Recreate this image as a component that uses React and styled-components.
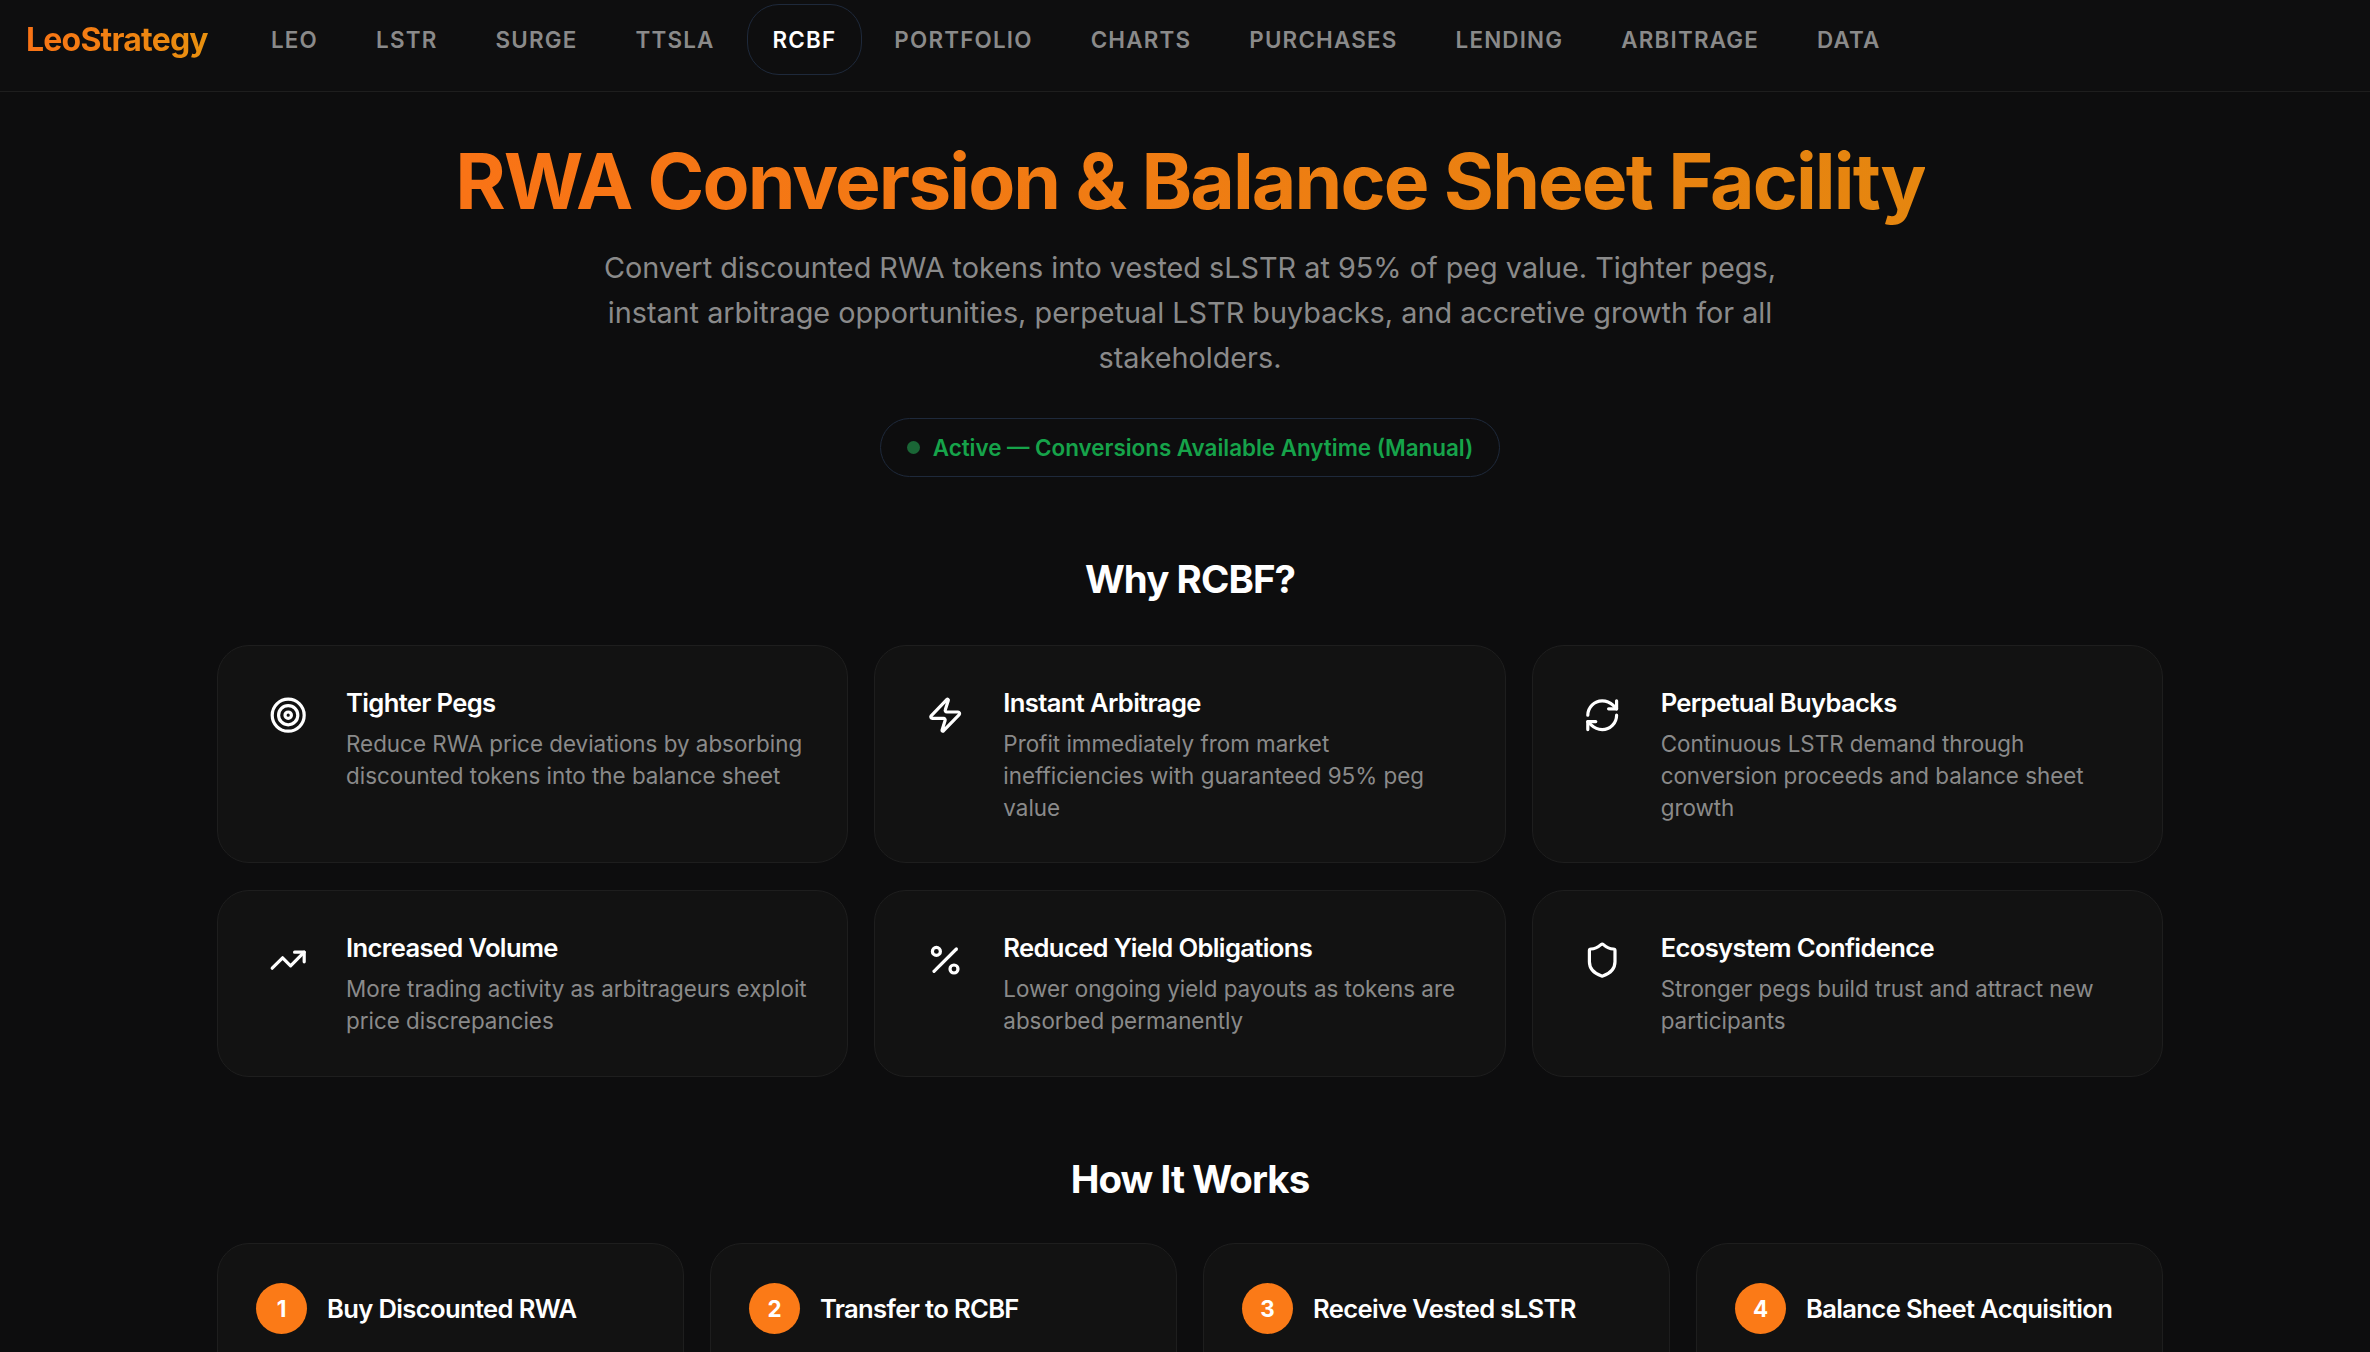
import React from "react";
import styled, { createGlobalStyle } from "styled-components";
import { Target, Zap, RefreshCw, TrendingUp, Percent, Shield } from "lucide-react";

const GlobalStyle = createGlobalStyle`
  html, body {
    margin: 0;
    padding: 0;
    background: #0d0d0e;
    font-family: "Inter", "Liberation Sans", sans-serif;
    color: #fff;
  }
  * { box-sizing: border-box; }
`;

const Page = styled.div`
  height: 1352px;
  overflow: hidden;
`;

const Nav = styled.nav`
  height: 92px;
  display: flex;
  align-items: flex-start;
  padding: 4px 0 0 26px;
  background: #0e0e0f;
  border-bottom: 1px solid #1e1e1e;
`;

const Logo = styled.div`
  width: 182px;
  margin-right: 37px;
  height: 71px;
  line-height: 71px;
  font-size: 32px;
  font-weight: 700;
  letter-spacing: -0.8px;
  white-space: nowrap;
  background: linear-gradient(90deg, #f97316, #e8900f);
  -webkit-background-clip: text;
  background-clip: text;
  color: transparent;
`;

const NavList = styled.div`
  display: flex;
  gap: 6px;
`;

const NavItem = styled.a`
  height: 71px;
  line-height: 69px;
  padding: 0 25px;
  font-size: 22.4px;
  font-weight: 600;
  letter-spacing: 1.2px;
  text-transform: uppercase;
  color: ${({ $active }) => ($active ? "#fff" : "#8a8a8a")};
  border: 1px solid ${({ $active }) => ($active ? "#1e293b" : "transparent")};
  border-radius: 32px;
`;

const Main = styled.main`
  padding-left: 10px;
  display: flex;
  flex-direction: column;
  align-items: center;
`;

const Title = styled.h1`
  margin: 43.5px 0 0;
  font-size: 76.8px;
  line-height: 92px;
  font-weight: 700;
  letter-spacing: -1.92px;
  background: linear-gradient(90deg, #f97316, #e5860f);
  -webkit-background-clip: text;
  background-clip: text;
  color: transparent;
`;

const Lead = styled.p`
  margin: 17px 0 0;
  width: 1200px;
  text-align: center;
  font-size: 28.8px;
  line-height: 45.3px;
  color: #8a8a8a;
`;

const Badge = styled.div`
  margin-top: 38px;
  height: 59px;
  display: flex;
  align-items: center;
  gap: 13px;
  padding: 0 26px;
  border: 1.5px solid #1e293b;
  border-radius: 30px;
  font-size: 22.4px;
  font-weight: 600;
  color: #16a34a;
`;

const Dot = styled.span`
  width: 13px;
  height: 13px;
  border-radius: 50%;
  background: #1a6636;
`;

const SectionTitle = styled.h2`
  margin: ${({ $top }) => $top}px 0 0;
  font-size: 38.4px;
  line-height: 46px;
  font-weight: 700;
  letter-spacing: -0.9px;
  color: #fff;
`;

const Grid = styled.div`
  width: 1946px;
  margin-top: ${({ $top }) => $top}px;
  display: grid;
  grid-template-columns: repeat(${({ $cols }) => $cols}, 1fr);
  gap: 27px 26px;
`;

const Card = styled.div`
  display: flex;
  align-items: flex-start;
  padding: 39px 34px 38px 40px;
  min-height: 187px;
  background: #121212;
  border: 1px solid #1e1e1e;
  border-radius: 32px;
`;

const IconBox = styled.div`
  flex: 0 0 60px;
  margin-right: 28px;
  padding-top: 11px;
  display: flex;
  justify-content: center;
  color: #fff;
`;

const CardTitle = styled.h3`
  margin: 0;
  font-size: 25.6px;
  line-height: 36px;
  font-weight: 600;
  letter-spacing: -0.65px;
  color: #fff;
`;

const CardText = styled.p`
  margin: 7px 0 0;
  font-size: 22.4px;
  line-height: 32px;
  color: #8a8a8a;
`;

const StepCard = styled.div`
  height: 200px;
  padding: 39px 38px;
  background: #121212;
  border: 1px solid #1e1e1e;
  border-radius: 32px;
  display: flex;
  align-items: flex-start;
  gap: 20px;
`;

const StepNum = styled.div`
  flex: 0 0 51px;
  height: 51px;
  border-radius: 50%;
  background: #fb7a17;
  display: flex;
  align-items: center;
  justify-content: center;
  font-size: 22.4px;
  font-weight: 700;
  color: #fff;
`;

const StepTitle = styled.div`
  height: 51px;
  line-height: 51px;
  font-size: 25.6px;
  font-weight: 600;
  letter-spacing: -0.65px;
  white-space: nowrap;
  color: #fff;
`;

const navItems = ["LEO", "LSTR", "SURGE", "TTSLA", "RCBF", "PORTFOLIO", "CHARTS", "PURCHASES", "LENDING", "ARBITRAGE", "DATA"];

const reasons = [
  { icon: Target, title: "Tighter Pegs", text: "Reduce RWA price deviations by absorbing discounted tokens into the balance sheet" },
  { icon: Zap, title: "Instant Arbitrage", text: "Profit immediately from market inefficiencies with guaranteed 95% peg value" },
  { icon: RefreshCw, title: "Perpetual Buybacks", text: "Continuous LSTR demand through conversion proceeds and balance sheet growth" },
  { icon: TrendingUp, title: "Increased Volume", text: "More trading activity as arbitrageurs exploit price discrepancies" },
  { icon: Percent, title: "Reduced Yield Obligations", text: "Lower ongoing yield payouts as tokens are absorbed permanently" },
  { icon: Shield, title: "Ecosystem Confidence", text: "Stronger pegs build trust and attract new participants" },
];

const steps = ["Buy Discounted RWA", "Transfer to RCBF", "Receive Vested sLSTR", "Balance Sheet Acquisition"];

const App = () => {
  return (
    <Page>
      <GlobalStyle />
      <Nav>
        <Logo>LeoStrategy</Logo>
        <NavList>
          {navItems.map((item) => (
            <NavItem key={item} $active={item === "RCBF"}>
              {item}
            </NavItem>
          ))}
        </NavList>
      </Nav>
      <Main>
        <Title>RWA Conversion &amp; Balance Sheet Facility</Title>
        <Lead>
          Convert discounted RWA tokens into vested sLSTR at 95% of peg value. Tighter pegs, instant
          arbitrage opportunities, perpetual LSTR buybacks, and accretive growth for all stakeholders.
        </Lead>
        <Badge>
          <Dot />
          Active — Conversions Available Anytime (Manual)
        </Badge>
        <SectionTitle $top={79}>Why RCBF?</SectionTitle>
        <Grid $cols={3} $top={42.5}>
          {reasons.map(({ icon: Icon, title, text }) => (
            <Card key={title}>
              <IconBox>
                <Icon size={38.4} strokeWidth={2} />
              </IconBox>
              <div>
                <CardTitle>{title}</CardTitle>
                <CardText>{text}</CardText>
              </div>
            </Card>
          ))}
        </Grid>
        <SectionTitle $top={79}>How It Works</SectionTitle>
        <Grid $cols={4} $top={41}>
          {steps.map((step, i) => (
            <StepCard key={step}>
              <StepNum>{i + 1}</StepNum>
              <StepTitle>{step}</StepTitle>
            </StepCard>
          ))}
        </Grid>
      </Main>
    </Page>
  );
};

export default App;
